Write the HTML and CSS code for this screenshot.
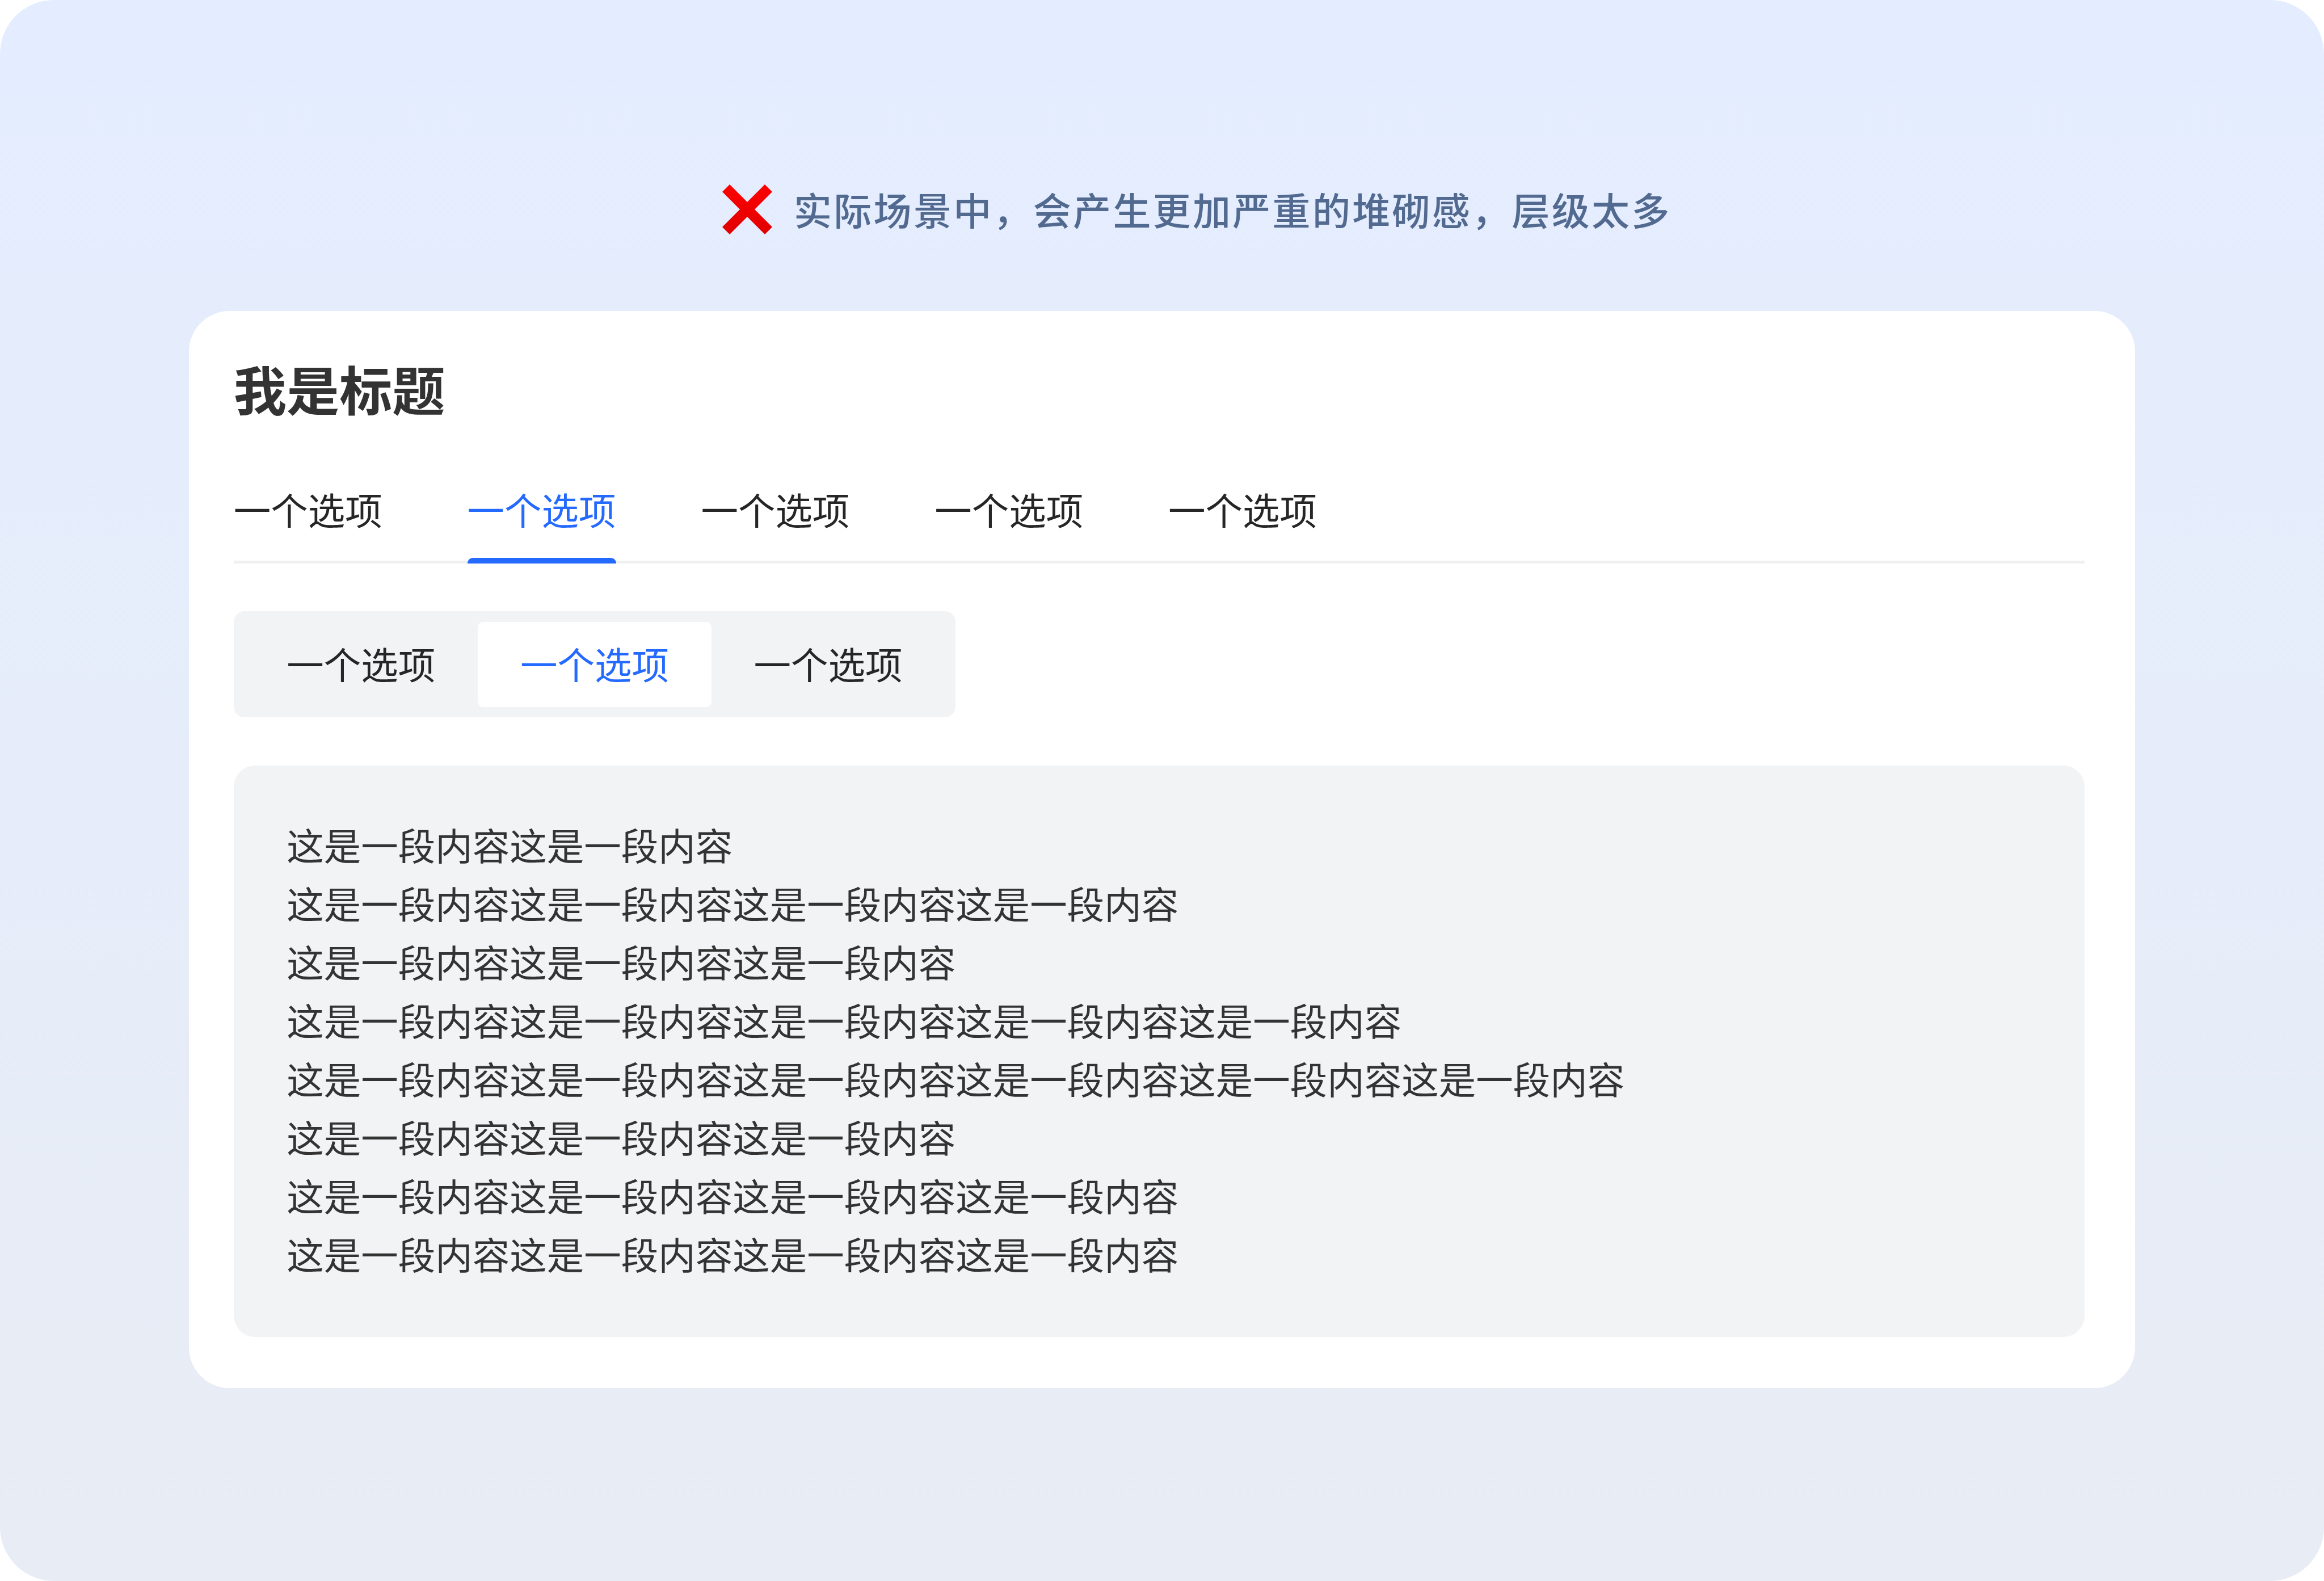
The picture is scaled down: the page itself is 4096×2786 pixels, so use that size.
FILE: index.html
```html
<!DOCTYPE html>
<html lang="zh-CN">
<head>
    <meta charset="UTF-8">
    <meta name="viewport" content="width=device-width, initial-scale=1.0">
    <title>我是标题</title>
    <link rel="stylesheet" href="styles.css">
</head>
<body>
    <div class="page">
        <div class="notice">
            <svg class="cross" viewBox="0 0 88 88">
                <defs>
                    <linearGradient id="red" x1="0" y1="0" x2="0" y2="1">
                        <stop offset="0" stop-color="#ff0000"/>
                        <stop offset="1" stop-color="#e00000"/>
                    </linearGradient>
                </defs>
                <path fill="url(#red)" d="M13 0L44 31L75 0L88 13L57 44L88 75L75 88L44 57L13 88L0 75L31 44L0 13Z"/>
            </svg>
            <span>实际场景中，会产生更加严重的堆砌感，层级太多</span>
        </div>
        <div class="card">
            <h2 class="title">我是标题</h2>
            <div class="tabs">
                <div class="tab">一个选项</div>
                <div class="tab active">一个选项</div>
                <div class="tab">一个选项</div>
                <div class="tab">一个选项</div>
                <div class="tab">一个选项</div>
            </div>
            <div class="segment">
                <div class="option">一个选项</div>
                <div class="option active">一个选项</div>
                <div class="option">一个选项</div>
            </div>
            <div class="content">
                <p>这是一段内容这是一段内容</p>
                <p>这是一段内容这是一段内容这是一段内容这是一段内容</p>
                <p>这是一段内容这是一段内容这是一段内容</p>
                <p>这是一段内容这是一段内容这是一段内容这是一段内容这是一段内容</p>
                <p>这是一段内容这是一段内容这是一段内容这是一段内容这是一段内容这是一段内容</p>
                <p>这是一段内容这是一段内容这是一段内容</p>
                <p>这是一段内容这是一段内容这是一段内容这是一段内容</p>
                <p>这是一段内容这是一段内容这是一段内容这是一段内容</p>
            </div>
        </div>
    </div>
</body>
</html>
```
FILE: styles.css
```css
* {
    box-sizing: border-box;
}
body {
    margin: 0;
    background: #fff;
    font-family: "Noto Sans CJK SC", sans-serif;
    color: #262626;
}
.page {
    width: 4096px;
    height: 2786px;
    padding: 318px 333.4px 0;
    border-radius: 95px;
    background: linear-gradient(#e4edff, #e8ecf4);
    overflow: hidden;
}
.notice {
    display: flex;
    align-items: center;
    height: 100px;
    padding-left: 939.6px;
    font-size: 67px;
    font-weight: 500;
    line-height: 100px;
    letter-spacing: 3.3px;
    color: #526a90;
    white-space: nowrap;
}
.cross {
    width: 88px;
    height: 88px;
    margin: 1px 38px 0 0;
}
.card {
    height: 1898.2px;
    margin-top: 129.7px;
    padding: 70.4px 89px 0 78.4px;
    border-radius: 71.5px;
    background: #fff;
}
.title {
    margin: 0;
    font-size: 93.2px;
    font-weight: 600;
    line-height: 131px;
    color: #333;
}
.tabs {
    display: flex;
    gap: 149.8px;
    height: 149.4px;
    margin-top: 95px;
    box-shadow: inset 0 -5px #f0f0f0;
}
.tab {
    font-size: 65.5px;
    line-height: 106px;
}
.tab.active {
    color: #256aff;
}
.tab.active::after {
    content: "";
    display: block;
    height: 10.5px;
    margin-top: 32.9px;
    border-radius: 9.4px 9.4px 0 0;
    background: #256aff;
}
.segment {
    display: flex;
    width: fit-content;
    height: 187px;
    margin-top: 84px;
    padding: 18.7px;
    border-radius: 18.7px;
    background: #f1f3f5;
}
.option {
    padding: 0 74.8px;
    border-radius: 9.4px;
    font-size: 65.5px;
    line-height: 145px;
    height: 149.6px;
}
.option.active {
    color: #256aff;
    background: #fff;
}
.content {
    height: 1007px;
    margin-top: 84.4px;
    padding: 88.3px 93.5px;
    border-radius: 37.4px;
    background: #f1f3f5;
    color: #333;
}
.content p {
    margin: 0;
    font-size: 65.5px;
    line-height: 102.9px;
}
```
